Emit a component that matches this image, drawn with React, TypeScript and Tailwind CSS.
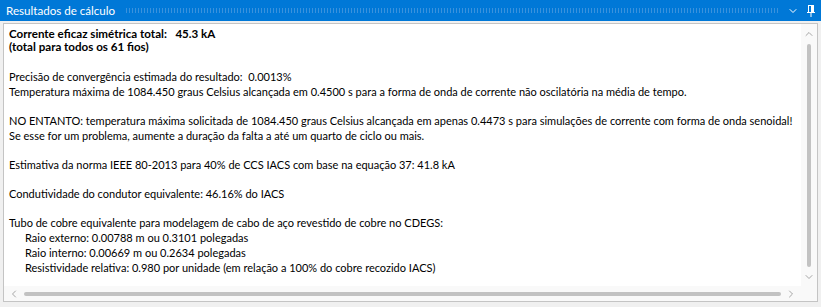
import { ChevronDown, ChevronUp, ChevronLeft, ChevronRight } from "lucide-react";

const font = { fontFamily: '"Segoe UI", Lato, "Liberation Sans", sans-serif' };

const Pin = () => (
  <svg width="8" height="12" viewBox="0 0 8 12" className="text-white">
    <rect x="1.5" y="0.5" width="5" height="7" fill="none" stroke="currentColor" />
    <rect x="4" y="1" width="2" height="6" fill="currentColor" />
    <line x1="0" y1="7.5" x2="8" y2="7.5" stroke="currentColor" />
    <line x1="4" y1="8" x2="4" y2="12" stroke="currentColor" />
  </svg>
);

export default function App() {
  return (
    <div className="w-[821px] h-[307px] bg-[#f0f0f0] flex flex-col text-[12px]" style={font}>
      {/* Title bar */}
      <div className="h-[21px] bg-[#0078d7] flex items-center pl-[6px] pr-[6px] shrink-0">
        <span className="text-white leading-none text-[11.6px]">Resultados de cálculo</span>
        <div className="flex-1 ml-[10px] mr-[8px] h-[5px] bg-[radial-gradient(circle,#3a92dd_0.6px,transparent_0.8px)] bg-[length:3px_2px]" />
        <ChevronDown size={12} strokeWidth={2} className="text-white mr-[8px]" />
        <Pin />
      </div>

      {/* Text box */}
      <div className="flex-1 mx-[3px] mt-[2px] mb-[5px] border border-[#c4c4c4] bg-white flex flex-col min-h-0">
        <div className="flex-1 flex min-h-0">
          <div className="flex-1 pl-[5px] pt-[3px] text-black text-[11px] leading-[15px] overflow-hidden whitespace-nowrap">
            <div className="font-bold text-[11.6px] leading-[13px]">
              <div>Corrente eficaz simétrica total:&nbsp;&nbsp; 45.3 kA</div>
              <div>(total para todos os 61 fios)</div>
            </div>
            <div className="h-[16px]" />
            <div>Precisão de convergência estimada do resultado:&nbsp; 0.0013%</div>
            <div>Temperatura máxima de 1084.450 graus Celsius alcançada em 0.4500 s para a forma de onda de corrente não oscilatória na média de tempo.</div>
            <div className="h-[14px]" />
            <div>NO ENTANTO: temperatura máxima solicitada de 1084.450 graus Celsius alcançada em apenas 0.4473 s para simulações de corrente com forma de onda senoidal!</div>
            <div>Se esse for um problema, aumente a duração da falta a até um quarto de ciclo ou mais.</div>
            <div className="h-[14px]" />
            <div>Estimativa da norma IEEE 80-2013 para 40% de CCS IACS com base na equação 37: 41.8 kA</div>
            <div className="h-[14px]" />
            <div>Condutividade do condutor equivalente: 46.16% do IACS</div>
            <div className="h-[14px]" />
            <div>Tubo de cobre equivalente para modelagem de cabo de aço revestido de cobre no CDEGS:</div>
            <div className="pl-[16px]">Raio externo: 0.00788 m ou 0.3101 polegadas</div>
            <div className="pl-[16px]">Raio interno: 0.00669 m ou 0.2634 polegadas</div>
            <div className="pl-[16px]">Resistividade relativa: 0.980 por unidade (em relação a 100% do cobre recozido IACS)</div>
          </div>
          {/* Vertical scrollbar */}
          <div className="w-[16px] bg-[#f9f9f9] flex flex-col items-center">
            <ChevronUp size={12} strokeWidth={1.5} className="text-[#8a8a8a] mt-[4px]" />
            <div className="flex-1 w-[4px] my-[4px] rounded-full bg-[#c2c2c2]" />
            <ChevronDown size={12} strokeWidth={1.5} className="text-[#8a8a8a] mb-[3px]" />
          </div>
        </div>
        {/* Horizontal scrollbar */}
        <div className="h-[15px] bg-[#f9f9f9] flex items-center pr-[16px]">
          <ChevronLeft size={12} strokeWidth={1.5} className="text-[#8a8a8a] ml-[4px]" />
          <div className="flex-1 h-[4px] mx-[4px] rounded-full bg-[#c2c2c2]" />
          <ChevronRight size={12} strokeWidth={1.5} className="text-[#8a8a8a] mr-[4px]" />
        </div>
      </div>
    </div>
  );
}
